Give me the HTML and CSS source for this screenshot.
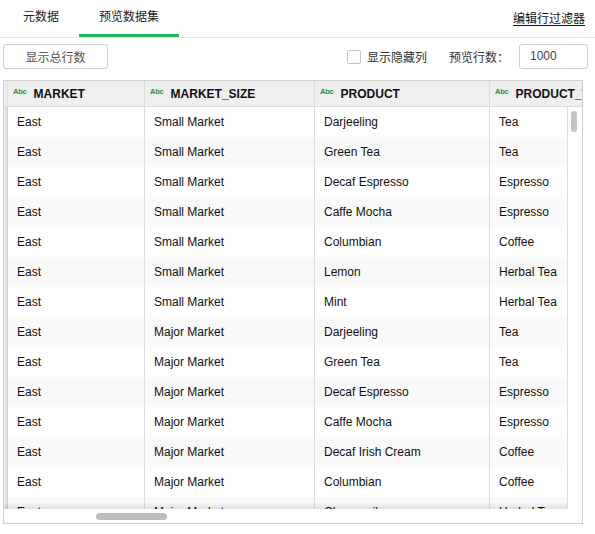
FILE: index.html
```html
<!DOCTYPE html>
<html lang="zh">
<head>
<meta charset="utf-8">
<link rel="stylesheet" href="styles.css">
</head>
<body>
<div class="tabbar">
  <div class="tabs">
    <div class="tab">元数据</div>
    <div class="tab active">预览数据集</div>
  </div>
  <a class="filter-link" href="#">编辑行过滤器</a>
</div>

<div class="toolbar">
  <button class="btn">显示总行数</button>
  <div class="toolbar-right">
    <label class="check"><span class="box"></span><span>显示隐藏列</span></label>
    <span class="rows-label">预览行数：</span>
    <div class="input">1000</div>
  </div>
</div>

<div class="grid">
  <div class="head">
    <div class="gutter"></div>
    <div class="hc c1"><span class="abc">Abc</span>MARKET</div>
    <div class="hc c2"><span class="abc">Abc</span>MARKET_SIZE</div>
    <div class="hc c3"><span class="abc">Abc</span>PRODUCT</div>
    <div class="hc c4"><span class="abc">Abc</span>PRODUCT_TYPE</div>
  </div>
  <div class="middle">
    <div class="viewport">
      <div class="row"><div class="gutter"></div><div class="c c1">East</div><div class="c c2">Small Market</div><div class="c c3">Darjeeling</div><div class="c c4">Tea</div></div>
      <div class="row"><div class="gutter"></div><div class="c c1">East</div><div class="c c2">Small Market</div><div class="c c3">Green Tea</div><div class="c c4">Tea</div></div>
      <div class="row"><div class="gutter"></div><div class="c c1">East</div><div class="c c2">Small Market</div><div class="c c3">Decaf Espresso</div><div class="c c4">Espresso</div></div>
      <div class="row"><div class="gutter"></div><div class="c c1">East</div><div class="c c2">Small Market</div><div class="c c3">Caffe Mocha</div><div class="c c4">Espresso</div></div>
      <div class="row"><div class="gutter"></div><div class="c c1">East</div><div class="c c2">Small Market</div><div class="c c3">Columbian</div><div class="c c4">Coffee</div></div>
      <div class="row"><div class="gutter"></div><div class="c c1">East</div><div class="c c2">Small Market</div><div class="c c3">Lemon</div><div class="c c4">Herbal Tea</div></div>
      <div class="row"><div class="gutter"></div><div class="c c1">East</div><div class="c c2">Small Market</div><div class="c c3">Mint</div><div class="c c4">Herbal Tea</div></div>
      <div class="row"><div class="gutter"></div><div class="c c1">East</div><div class="c c2">Major Market</div><div class="c c3">Darjeeling</div><div class="c c4">Tea</div></div>
      <div class="row"><div class="gutter"></div><div class="c c1">East</div><div class="c c2">Major Market</div><div class="c c3">Green Tea</div><div class="c c4">Tea</div></div>
      <div class="row"><div class="gutter"></div><div class="c c1">East</div><div class="c c2">Major Market</div><div class="c c3">Decaf Espresso</div><div class="c c4">Espresso</div></div>
      <div class="row"><div class="gutter"></div><div class="c c1">East</div><div class="c c2">Major Market</div><div class="c c3">Caffe Mocha</div><div class="c c4">Espresso</div></div>
      <div class="row"><div class="gutter"></div><div class="c c1">East</div><div class="c c2">Major Market</div><div class="c c3">Decaf Irish Cream</div><div class="c c4">Coffee</div></div>
      <div class="row"><div class="gutter"></div><div class="c c1">East</div><div class="c c2">Major Market</div><div class="c c3">Columbian</div><div class="c c4">Coffee</div></div>
      <div class="row"><div class="gutter"></div><div class="c c1">East</div><div class="c c2">Major Market</div><div class="c c3">Chamomile</div><div class="c c4">Herbal Tea</div></div>
    </div>
    <div class="vscroll"><div class="vthumb"></div></div>
  </div>
  <div class="hscroll"><div class="hthumb"></div></div>
</div>
</body>
</html>
```

FILE: styles.css
```css
* { box-sizing: border-box; }
body {
  margin: 0;
  font-family: "Liberation Sans", Arial, "Noto Sans CJK SC", sans-serif;
  font-size: 12px;
  color: #222;
  background: #fff;
}

.tabbar {
  display: flex;
  justify-content: space-between;
  align-items: flex-start;
  height: 38px;
  border-bottom: 1px solid #e8e8e8;
  padding: 0 10px 0 3px;
}
.tabs { display: flex; }
.tab {
  height: 37px;
  padding: 0 20px;
  line-height: 32px;
  border-bottom: 3px solid transparent;
  font-family: "Noto Sans CJK SC", sans-serif;
  color: #222;
}
.tab.active { border-bottom-color: #22b55a; }
.filter-link {
  font-family: "Noto Sans CJK SC", sans-serif;
  color: #111;
  line-height: 36px;
  text-decoration: underline;
  text-underline-offset: 2px;
}

.toolbar {
  display: flex;
  justify-content: space-between;
  align-items: center;
  margin-top: 6px;
  padding: 0 7px 0 3px;
  height: 25px;
}
.btn {
  width: 105px;
  height: 25px;
  border: 1px solid #cfcfcf;
  border-radius: 3px;
  background: #fff;
  color: #555;
  font-family: "Noto Sans CJK SC", sans-serif;
  font-size: 12px;
  padding: 0;
}
.toolbar-right {
  display: flex;
  align-items: center;
  font-family: "Noto Sans CJK SC", sans-serif;
  color: #333;
}
.check { display: flex; align-items: center; gap: 6px; }
.box {
  width: 14px;
  height: 14px;
  border: 1px solid #c4c4c4;
  border-radius: 2px;
  background: #fff;
}
.rows-label { margin-left: 22px; margin-right: 10px; }
.input {
  width: 69px;
  height: 25px;
  border: 1px solid #cfcfcf;
  border-radius: 3px;
  padding-left: 10px;
  line-height: 23px;
  color: #444;
  font-family: "Liberation Sans", Arial, sans-serif;
}

.grid {
  margin: 11px 0 0 3px;
  width: 580px;
  height: 444px;
  border: 1px solid #d0d0d0;
  display: flex;
  flex-direction: column;
  overflow: hidden;
}
.head {
  display: flex;
  height: 26px;
  flex: none;
  background: #efefef;
  border-bottom: 1px solid #dcdcdc;
  overflow: hidden;
  white-space: nowrap;
}
.gutter {
  width: 4px;
  flex: none;
  background: linear-gradient(to right, #f2f2f2, #dadada 70%, #cfcfcf);
}
.head .gutter { background: linear-gradient(to right, #efefef, #efefef 70%, #d6d6d6); }
.c1 { width: 137px; }
.c2 { width: 170px; }
.c3 { width: 175px; }
.c4 { width: 140px; border-right: none !important; }
.hc {
  flex: none;
  display: flex;
  align-items: center;
  padding-left: 5px;
  border-right: 1px solid #dcdcdc;
  font-weight: bold;
  color: #111;
  overflow: hidden;
}
.abc {
  font-size: 7.5px;
  color: #2e8b3e;
  font-weight: bold;
  margin-right: 7px;
  letter-spacing: -0.2px;
  position: relative;
  top: -2px;
}
.middle {
  display: flex;
  height: 402px;
  flex: none;
}
.viewport {
  width: 563px;
  height: 402px;
  overflow: hidden;
  position: relative;
}
.viewport::after {
  content: "";
  position: absolute;
  left: 0;
  right: 0;
  bottom: 0;
  height: 7px;
  background: linear-gradient(to bottom, rgba(0,0,0,0), rgba(0,0,0,0.1));
}
.row {
  display: flex;
  height: 30px;
  white-space: nowrap;
}
.row:nth-child(even) { background: #f9f9f9; }
.c {
  flex: none;
  padding-left: 9px;
  line-height: 30px;
  border-right: 1px solid #dcdcdc;
  color: #111;
  overflow: hidden;
}
.vscroll {
  width: 15px;
  flex: none;
  border-left: 1px solid #dcdcdc;
  padding: 4px 0 0 3px;
  background: #fff;
}
.vthumb {
  width: 6px;
  height: 21px;
  border-radius: 3px;
  background: #c4c4c4;
}
.hscroll {
  height: 14px;
  flex: none;
  padding: 4px 0 0 92px;
  background: #fff;
}
.hthumb {
  width: 71px;
  height: 7px;
  border-radius: 4px;
  background: #bdbdbd;
}
```
